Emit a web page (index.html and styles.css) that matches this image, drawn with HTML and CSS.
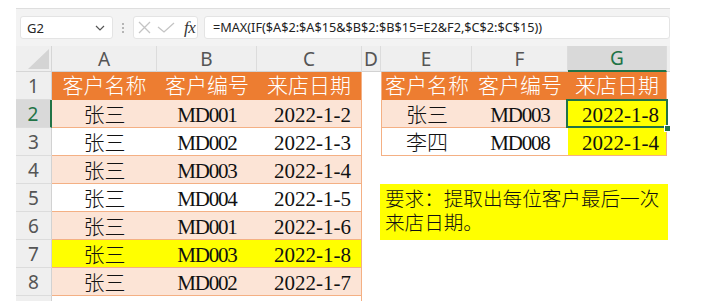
FILE: index.html
```html
<!DOCTYPE html>
<html lang="zh-CN">
<head>
<meta charset="utf-8">
<title>Excel</title>
<link rel="stylesheet" href="styles.css">
</head>
<body>
<div class="app">
  <div class="toolbar">
    <div class="namebox">
      <span class="ref">G2</span>
      <svg class="chev" width="10" height="6" viewBox="0 0 10 6"><polyline points="1,1 5,5 9,1" fill="none" stroke="#555" stroke-width="1.2"/></svg>
    </div>
    <div class="grip"><i></i><i></i><i></i></div>
    <div class="fxbox">
      <svg class="ico" width="13" height="13" viewBox="0 0 13 13"><path d="M1 1 L12 12 M12 1 L1 12" stroke="#c4c4c4" stroke-width="1.3" fill="none"/></svg>
      <svg class="ico chk" width="18" height="11" viewBox="0 0 18 11"><polyline points="1,5 7,10 17,1" fill="none" stroke="#c4c4c4" stroke-width="1.3"/></svg>
      <span class="fx">fx</span>
    </div>
    <div class="formula">=MAX(IF($A$2:$A$15&amp;$B$2:$B$15=E2&amp;F2,$C$2:$C$15))</div>
  </div>

  <div class="sheet">
    <div class="corner"><svg width="36" height="26" viewBox="0 0 36 26"><polygon points="33,3 33,23 12,23" fill="#d4d4d4"/></svg></div>
    <div class="ch">A</div><div class="ch">B</div><div class="ch">C</div><div class="ch">D</div>
    <div class="ch">E</div><div class="ch">F</div><div class="ch act">G</div><div class="ch stub"></div>

    <div class="note">要求：提取出每位客户最后一次<br>来店日期。</div>

    <div class="rh">1</div>
    <div class="c hd">客户名称</div><div class="c hd">客户编号</div><div class="c hd bR">来店日期</div>
    <div class="c"></div>
    <div class="c hd bL">客户名称</div><div class="c hd">客户编号</div><div class="c hd bR">来店日期</div>

    <div class="rh act">2</div>
    <div class="c t pk">张三</div><div class="c t pk cd">MD001</div><div class="c t pk bR dt">2022-1-2</div>
    <div class="c"></div>
    <div class="c t pk bL">张三</div><div class="c t pk cd">MD003</div><div class="c t yl bR dt sel">2022-1-8</div>

    <div class="rh">3</div>
    <div class="c t">张三</div><div class="c t cd">MD002</div><div class="c t bR dt">2022-1-3</div>
    <div class="c"></div>
    <div class="c t bL">李四</div><div class="c t cd">MD008</div><div class="c t yl bR dt">2022-1-4</div>

    <div class="rh">4</div>
    <div class="c t pk">张三</div><div class="c t pk cd">MD003</div><div class="c t pk bR dt">2022-1-4</div>

    <div class="rh">5</div>
    <div class="c t">张三</div><div class="c t cd">MD004</div><div class="c t bR dt">2022-1-5</div>

    <div class="rh">6</div>
    <div class="c t pk">张三</div><div class="c t pk cd">MD001</div><div class="c t pk bR dt">2022-1-6</div>

    <div class="rh">7</div>
    <div class="c t yl">张三</div><div class="c t yl cd">MD003</div><div class="c t yl bR dt">2022-1-8</div>

    <div class="rh">8</div>
    <div class="c t pk">张三</div><div class="c t pk cd">MD002</div><div class="c t pk bR dt">2022-1-7</div>

    <div class="rh"></div>
    <div class="c t"></div><div class="c t"></div><div class="c t bR"></div>
  </div>
</div>
</body>
</html>
```

FILE: styles.css
```css
html, body {
  margin: 0;
  padding: 0;
  overflow: hidden;
  background: #ffffff;
}

body {
  width: 710px;
  height: 301px;
}

.app {
  margin: 8px 0 0 16px;
  width: 654px;
}

/* ---------- formula toolbar ---------- */
.toolbar {
  box-sizing: border-box;
  height: 38px;
  border-top: 1px solid #dedede;
  background: #f3f3f3;
  display: flex;
  align-items: flex-start;
  padding: 7px 0 0 4px;
  font-family: "Noto Sans", "Open Sans", sans-serif;
}

.namebox {
  box-sizing: border-box;
  width: 93px;
  height: 23px;
  background: #fff;
  border: 1px solid #e4e4e4;
  border-radius: 3px;
  display: flex;
  align-items: center;
  justify-content: space-between;
  padding: 0 7px 0 6px;
}

.ref {
  font-size: 13px;
  color: #262626;
}

.grip {
  width: 20px;
  height: 23px;
  display: flex;
  flex-direction: column;
  align-items: center;
  justify-content: center;
  gap: 2px;
}

.grip i {
  display: block;
  width: 2px;
  height: 2px;
  background: #b5b5b5;
}

.fxbox {
  box-sizing: border-box;
  width: 65px;
  height: 23px;
  background: #fff;
  border: 1px solid #e4e4e4;
  border-radius: 3px;
  display: flex;
  align-items: center;
  padding-left: 4px;
}

.ico {
  display: block;
}

.chk {
  margin-left: 6px;
}

.fx {
  margin-left: 9px;
  font-family: "Liberation Serif", serif;
  font-style: italic;
  font-size: 17px;
  color: #333;
  line-height: 1;
  letter-spacing: -0.5px;
}

.formula {
  box-sizing: border-box;
  flex: 1;
  margin-left: 6px;
  height: 23px;
  background: #fff;
  border: 1px solid #e4e4e4;
  border-radius: 3px;
  padding-left: 8px;
  font-size: 12.7px;
  line-height: 21px;
  color: #222;
  white-space: nowrap;
  overflow: hidden;
}

/* ---------- sheet grid ---------- */
.sheet {
  display: grid;
  grid-template-columns: 36px 105px 100px 105px 19px 91px 96px 99px 3px;
  grid-template-rows: 26px;
  grid-auto-rows: 28px;
  height: 255px;
  overflow: hidden;
}

.corner {
  grid-column: 1;
  background: #efefef;
  border-right: 1px solid #d6d6d6;
  border-bottom: 1px solid #d6d6d6;
  box-sizing: border-box;
}

.corner svg {
  display: block;
}

.ch {
  box-sizing: border-box;
  background: #efefef;
  border-right: 1px solid #dcdcdc;
  border-bottom: 1px solid #d2d2d2;
  display: flex;
  align-items: center;
  justify-content: center;
  font-family: "Noto Sans", "Open Sans", sans-serif;
  font-size: 19px;
  color: #555;
  line-height: 1;
  padding-top: 1px;
}

.ch.act {
  background: #d9d9d9;
  color: #217346;
  border-bottom: 2px solid #217346;
}

.ch.stub {
  border-right: none;
}

.rh {
  grid-column: 1;
  box-sizing: border-box;
  background: #efefef;
  border-right: 1px solid #d2d2d2;
  border-bottom: 1px solid #dcdcdc;
  display: flex;
  align-items: center;
  justify-content: center;
  font-family: "Noto Sans", "Open Sans", sans-serif;
  font-size: 19px;
  color: #555;
  line-height: 1;
  padding-top: 2px;
}

.rh.act {
  background: #d9d9d9;
  color: #217346;
  border-right: 2px solid #217346;
}

.c {
  box-sizing: border-box;
  display: flex;
  align-items: center;
  justify-content: center;
  font-family: "Liberation Serif", "Noto Sans CJK SC", serif;
  font-size: 21px;
  font-weight: 300;
  line-height: 1;
  color: #111;
  padding-top: 3px;
  white-space: nowrap;
}

.hd {
  background: #ed7d31;
  color: #ffffff;
  padding-top: 0;
}

.cd {
  letter-spacing: -1.2px;
}

.t {
  border-bottom: 1px solid #f4b084;
}

.pk {
  background: #fce4d6;
}

.yl {
  background: #ffff00;
}

.bR {
  border-right: 1px solid #f4b084;
}

.bL {
  border-left: 1px solid #f4b084;
}

.dt {
  padding-left: 7px;
}

.sel {
  position: relative;
}

.sel::after {
  content: "";
  position: absolute;
  left: -2px;
  top: -1px;
  right: -2px;
  bottom: -1px;
  border: 2px solid #217346;
}

.sel::before {
  content: "";
  position: absolute;
  right: -5px;
  bottom: -5px;
  width: 5px;
  height: 5px;
  background: #217346;
  border: 1px solid #ffffff;
  z-index: 2;
}

/* ---------- text box ---------- */
.note {
  grid-column: 6 / span 3;
  grid-row: 6 / span 2;
  margin: 0 -1px;
  background: #ffff00;
  font-family: "Liberation Serif", "Noto Sans CJK SC", serif;
  font-size: 19.6px;
  font-weight: 300;
  line-height: 24px;
  color: #111;
  padding: 4px 5px;
  white-space: nowrap;
}
```
